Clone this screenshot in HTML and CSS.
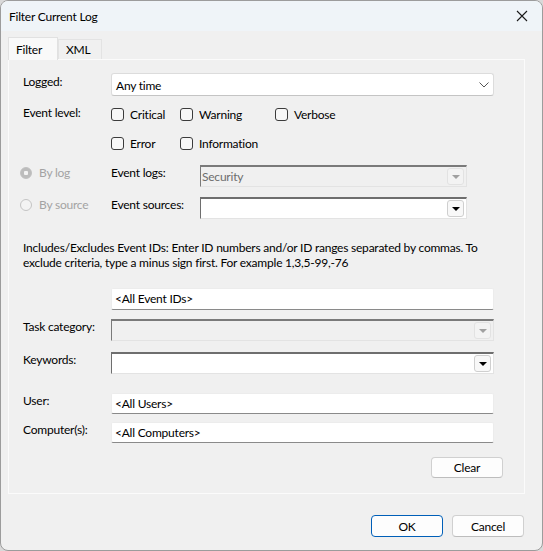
FILE: index.html
```html
<!DOCTYPE html>
<html lang="en">
<head>
    <meta charset="UTF-8">
    <title>Filter Current Log</title>
    <link rel="stylesheet" href="styles.css">
</head>
<body>
    <div class="window">
        <div class="titlebar">
            <span class="title">Filter Current Log</span>
            <svg class="close" width="12" height="12" viewBox="0 0 12 12"><path d="M1 1 L11 11 M11 1 L1 11" stroke="#1a1a1a" stroke-width="1.1" fill="none"/></svg>
        </div>

        <div class="tabs">
            <div class="tab active">Filter</div>
            <div class="tab">XML</div>
        </div>

        <div class="panel">
            <div class="row row-logged">
                <span class="lbl">Logged:</span>
                <div class="select">
                    <span>Any time</span>
                    <svg width="10" height="6" viewBox="0 0 10 6"><path d="M0.5 0.5 L5 5 L9.5 0.5" stroke="#555" stroke-width="1" fill="none"/></svg>
                </div>
            </div>

            <div class="row row-level">
                <span class="lbl">Event level:</span>
                <div class="checks">
                    <label class="check"><span class="box"></span>Critical</label>
                    <label class="check"><span class="box"></span>Warning</label>
                    <label class="check"><span class="box"></span>Verbose</label>
                    <label class="check"><span class="box"></span>Error</label>
                    <label class="check"><span class="box"></span>Information</label>
                </div>
            </div>

            <div class="row row-log">
                <div class="radio-col"><span class="radio checked"></span>By log</div>
                <span class="lbl2">Event logs:</span>
                <div class="combo short disabled"><span>Security</span><span class="drop"></span></div>
            </div>

            <div class="row row-source">
                <div class="radio-col"><span class="radio"></span>By source</div>
                <span class="lbl2">Event sources:</span>
                <div class="combo short"><span></span><span class="drop"></span></div>
            </div>

            <p class="desc">Includes/Excludes Event IDs: Enter ID numbers and/or ID ranges separated by commas. To<br>exclude criteria, type a minus sign first. For example 1,3,5-99,-76</p>

            <div class="row row-ids">
                <div class="field">&lt;All Event IDs&gt;</div>
            </div>

            <div class="row row-task">
                <span class="lbl">Task category:</span>
                <div class="combo wide disabled"><span></span><span class="drop"></span></div>
            </div>

            <div class="row row-keywords">
                <span class="lbl">Keywords:</span>
                <div class="combo wide"><span></span><span class="drop"></span></div>
            </div>

            <div class="row row-user">
                <span class="lbl">User:</span>
                <div class="field">&lt;All Users&gt;</div>
            </div>

            <div class="row row-computer">
                <span class="lbl">Computer(s):</span>
                <div class="field">&lt;All Computers&gt;</div>
            </div>

            <div class="row row-clear">
                <button class="btn">Clear</button>
            </div>
        </div>

        <div class="footer">
            <button class="btn primary">OK</button>
            <button class="btn">Cancel</button>
        </div>
    </div>
</body>
</html>
```

FILE: styles.css
```css
* {
    box-sizing: border-box;
}
body {
    margin: 0;
    background-color: #d9d9d9;
    font-family: Lato, "Noto Sans", Arial, sans-serif;
    font-size: 12px;
    letter-spacing: -0.22px;
    color: #000;
}
.window {
    width: 543px;
    height: 551px;
    background-color: #f0f0f0;
    border: 1px solid #9c9c9c;
    border-radius: 8px;
    overflow: hidden;
}
.titlebar {
    height: 30px;
    background-color: #eff4f8;
    display: flex;
    align-items: center;
    justify-content: space-between;
    padding: 0 14px 0 8px;
}
.title {
    line-height: 15px;
}
.tabs {
    height: 28px;
    display: flex;
    align-items: flex-end;
    padding-left: 7px;
    position: relative;
    z-index: 1;
}
.tab {
    height: 20px;
    padding: 1px 8px 0 7px;
    width: 44px;
    border: 1px solid #e3e3e3;
    border-bottom: none;
    background-color: #f0f0f0;
    line-height: 17px;
}
.tab.active {
    width: 50px;
    height: 23px;
    padding: 3px 8px 0 7px;
    background-color: #f9f9f9;
    border-color: #e1e1e1;
    margin-bottom: -1px;
}
.panel {
    margin-left: 7px;
    width: 517px;
    height: 435px;
    border: 1px solid #fbfbfb;
    padding: 0 20px 0 14px;
    display: flex;
    flex-direction: column;
}
.row {
    display: flex;
    align-items: flex-start;
}
.lbl {
    width: 88px;
    line-height: 15px;
    flex-shrink: 0;
}
.lbl2 {
    width: 89px;
    line-height: 15px;
    flex-shrink: 0;
}
.row-logged {
    margin-top: 13px;
}
.row-logged .lbl {
    margin-top: 1px;
}
.select {
    width: 383px;
    height: 23px;
    background-color: #fff;
    border: 1px solid #dcdcdc;
    border-bottom-color: #c4c4c4;
    border-radius: 3px;
    display: flex;
    align-items: center;
    justify-content: space-between;
    padding: 1px 4px 0 4px;
}
.select span {
    line-height: 15px;
}
.row-level {
    margin-top: 9px;
}
.checks {
    display: grid;
    grid-template-columns: 69px 95px auto;
    grid-auto-rows: 18px;
    row-gap: 11px;
}
.check {
    display: flex;
    align-items: center;
    gap: 6px;
    line-height: 15px;
}
.box {
    width: 13px;
    height: 13px;
    border: 1px solid #3b3b3b;
    border-radius: 3px;
    background-color: #f7f7f7;
    flex-shrink: 0;
}
.row-log {
    margin-top: 13px;
}
.row-source {
    margin-top: 10px;
}
.radio-col {
    width: 88px;
    margin-left: -3px;
    margin-right: 3px;
    display: flex;
    align-items: center;
    gap: 7px;
    color: #a3a3a3;
    line-height: 15px;
}
.radio {
    width: 12px;
    height: 12px;
    border: 1px solid #c4c4c4;
    border-radius: 50%;
    background-color: #f3f3f3;
    flex-shrink: 0;
}
.radio.checked {
    border-color: #c0c0c0;
    background: radial-gradient(circle, #f3f3f3 0 2px, #bcbcbc 2.5px);
}
.combo {
    height: 22px;
    background-color: #fff;
    border-top: 2px solid #6e6e6e;
    border-left: 1px solid #6e6e6e;
    border-right: 1px solid #e3e3e3;
    border-bottom: 1px solid #e3e3e3;
    display: flex;
    align-items: center;
    justify-content: space-between;
    padding: 0 2px 0 1px;
}
.combo.short {
    width: 267px;
}
.combo.wide {
    width: 383px;
}
.combo.disabled {
    background-color: #f0f0f0;
    color: #6d6d6d;
    border-top-color: #7a7a7a;
    border-left-color: #7a7a7a;
}
.combo span:first-child {
    line-height: 15px;
}
.drop {
    width: 17px;
    height: 17px;
    border: 1px solid #cfcfcf;
    border-radius: 3px;
    background-color: #f8f8f8;
    position: relative;
}
.drop::after {
    content: "";
    position: absolute;
    left: 4px;
    top: 6px;
    border-left: 4px solid transparent;
    border-right: 4px solid transparent;
    border-top: 4px solid #000;
}
.combo.disabled .drop {
    border-color: #e2e2e2;
    background-color: #f3f3f3;
}
.combo.disabled .drop::after {
    border-top-color: #a0a0a0;
}
.desc {
    margin: 21px 0 0 0;
    line-height: 15px;
    white-space: nowrap;
}
.field {
    width: 383px;
    height: 22px;
    background-color: #fff;
    border: 1px solid #ececec;
    border-bottom-color: #8a8a8a;
    border-radius: 2px;
    padding: 1px 3px 0 3px;
    line-height: 18px;
}
.row-ids {
    margin-top: 18px;
    padding-left: 88px;
}
.row-task {
    margin-top: 9px;
}
.row-keywords {
    margin-top: 11px;
}
.row-user {
    margin-top: 19px;
}
.row-user .field,
.row-computer .field {
    height: 21px;
}
.row-computer {
    margin-top: 8px;
}
.row-clear {
    margin-top: 14px;
    justify-content: flex-end;
    padding-right: 1px;
}
.btn {
    width: 72px;
    height: 21px;
    font-family: Lato, "Noto Sans", Arial, sans-serif;
    font-size: 12px;
    letter-spacing: -0.22px;
    background-color: #fdfdfd;
    border: 1px solid #d0d0d0;
    border-bottom-color: #bdbdbd;
    border-radius: 4px;
    padding: 0;
    line-height: 17px;
    color: #000;
}
.btn.primary {
    border-color: #005fb8;
}
.footer {
    display: flex;
    justify-content: flex-end;
    gap: 9px;
    padding: 21px 18px 0 0;
}
.footer .btn {
    height: 22px;
}
```
